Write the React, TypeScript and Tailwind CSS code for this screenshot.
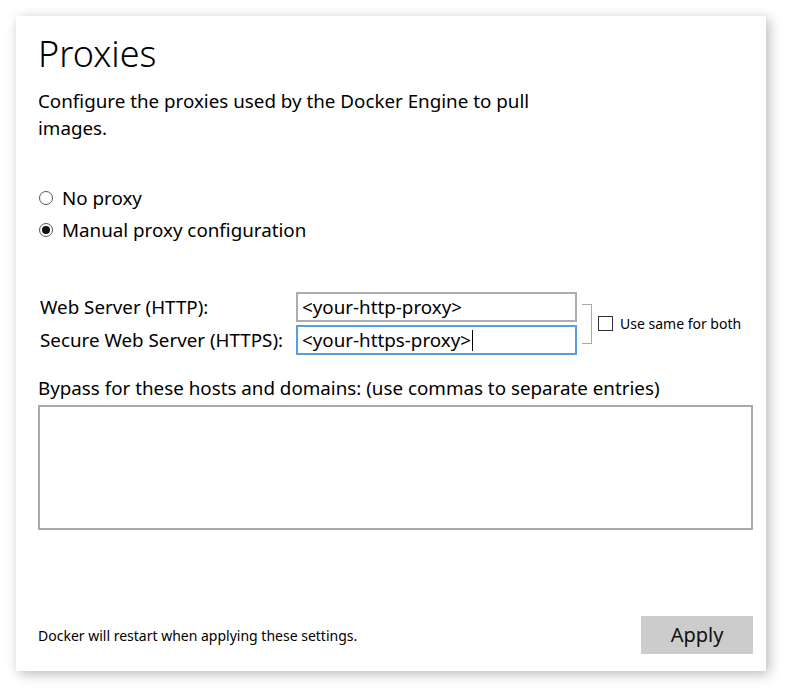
import { useState } from "react";

const font = { fontFamily: '"Segoe UI", "Noto Sans", sans-serif' };

function Radio({ checked, label }: { checked: boolean; label: string }) {
  return (
    <label className="flex items-center h-[32px] gap-[9px] pl-[1px]">
      <span className="w-[14px] h-[14px] rounded-full border border-[#555] flex items-center justify-center bg-white">
        {checked && <span className="w-[8px] h-[8px] rounded-full bg-[#111]" />}
      </span>
      <span className="text-[18.8px] text-black">{label}</span>
    </label>
  );
}

export default function App() {
  const [mode] = useState("manual");

  return (
    <div className="w-[790px] h-[695px] bg-white p-4" style={font}>
      <div className="w-[750px] h-[655px] bg-white shadow-[3px_3px_12px_rgba(0,0,0,0.28)] flex flex-col pl-[22px] pr-[13px] pt-[15px] pb-[17px] text-black">
        <h1 className="text-[36px] font-light leading-[46px]">Proxies</h1>
        <p className="mt-[11px] text-[18.8px] leading-[27px] w-[530px]">
          Configure the proxies used by the Docker Engine to pull images.
        </p>

        <div className="mt-[40px] flex flex-col">
          <Radio checked={mode === "none"} label="No proxy" />
          <Radio checked={mode === "manual"} label="Manual proxy configuration" />
        </div>

        <div className="mt-[46px] flex items-center">
          <div className="flex flex-col gap-[3px]">
            <div className="flex items-center">
              <span className="w-[258px] pl-[2px] text-[18.8px]">Web Server (HTTP):</span>
              <div className="w-[281px] h-[30px] border-2 border-[#adadad] flex items-center px-[4px] text-[18.8px]">
                &lt;your-http-proxy&gt;
              </div>
            </div>
            <div className="flex items-center">
              <span className="w-[258px] pl-[2px] text-[18.8px]">Secure Web Server (HTTPS):</span>
              <div className="w-[281px] h-[30px] border-2 border-[#5b9de4] flex items-center px-[4px] text-[18.8px]">
                &lt;your-https-proxy&gt;
                <span className="w-[1px] h-[21px] bg-black ml-[1px]" />
              </div>
            </div>
          </div>
          <div className="ml-[5px] w-[10px] h-[40px] border-t border-r border-b border-[#a8a8a8]" />
          <label className="ml-[6px] flex items-center gap-[7px]">
            <span className="w-[15px] h-[15px] border border-[#333] bg-white" />
            <span className="text-[14px]">Use same for both</span>
          </label>
        </div>

        <p className="mt-[20px] text-[18.8px] leading-[26px]">
          Bypass for these hosts and domains: (use commas to separate entries)
        </p>
        <div className="mt-[4px] w-[715px] h-[125px] border-2 border-[#aaaaad] bg-white" />

        <div className="mt-auto flex items-end justify-between">
          <span className="text-[14px] mb-[8px]">Docker will restart when applying these settings.</span>
          <button type="button" className="w-[112px] h-[38px] bg-[#cccccc] text-[20px] text-[#111]">
            Apply
          </button>
        </div>
      </div>
    </div>
  );
}
